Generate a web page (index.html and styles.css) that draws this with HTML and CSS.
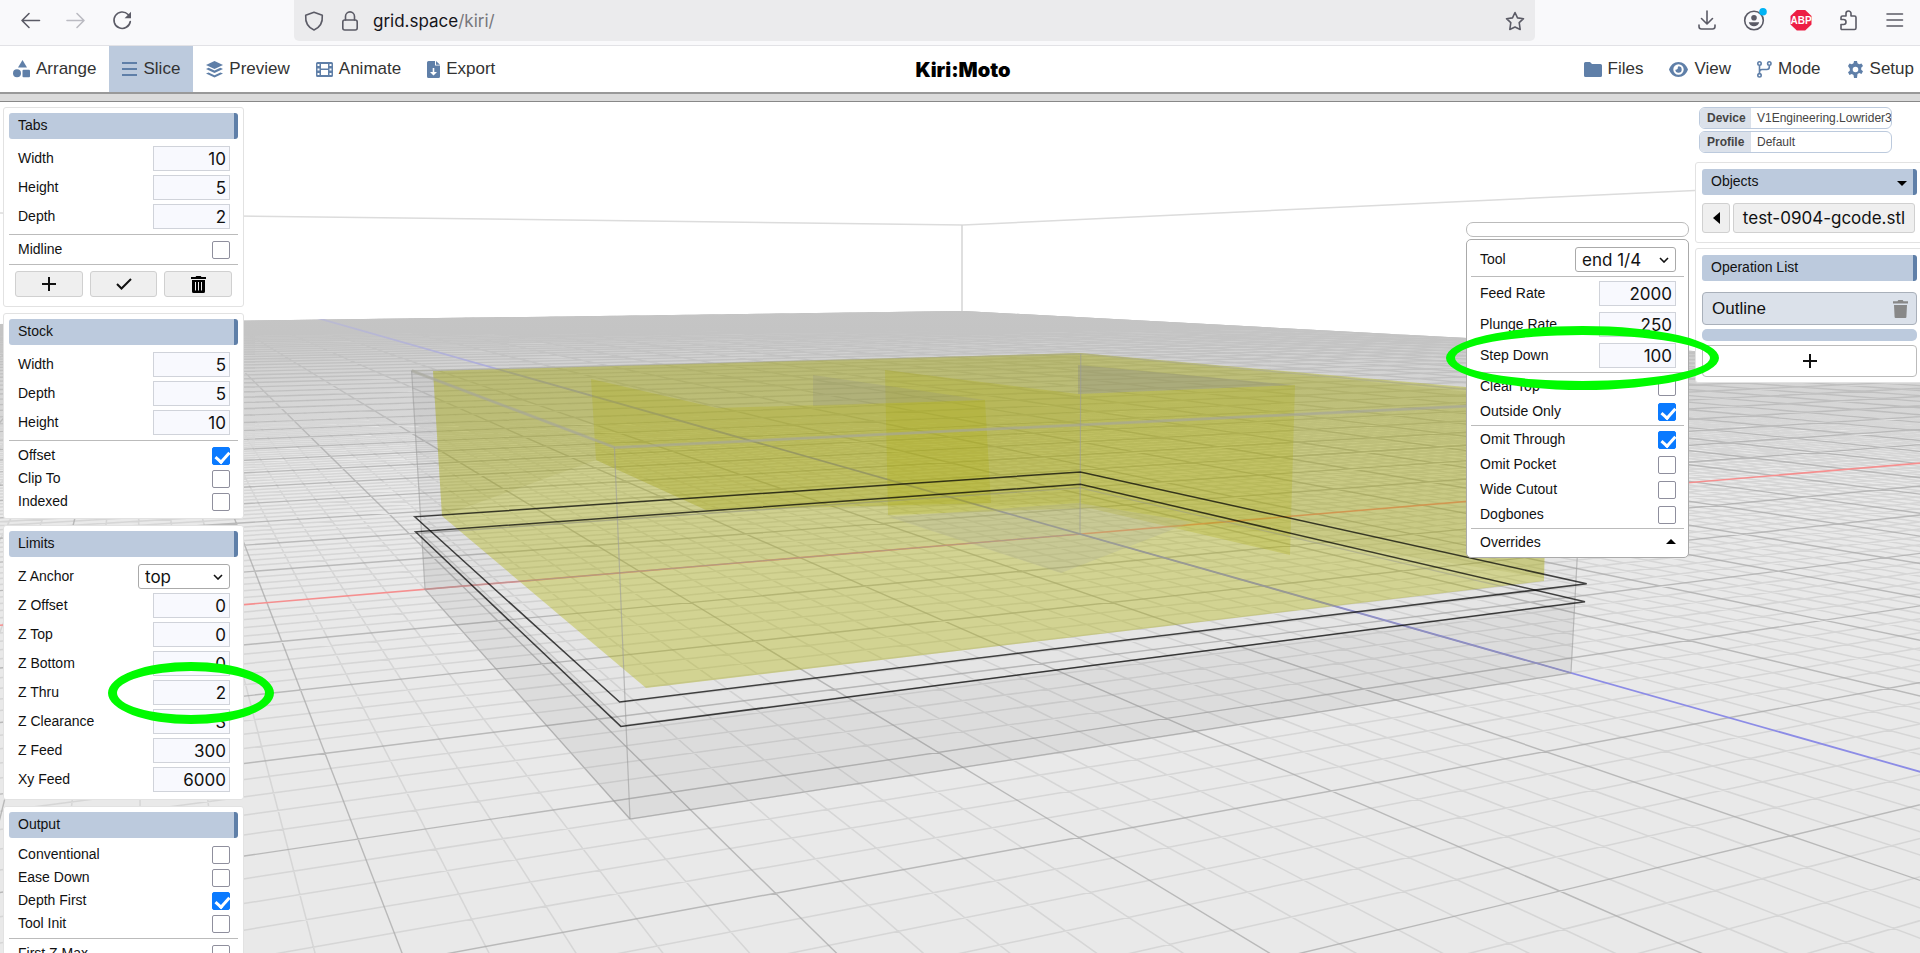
FILE: index.html
```html
<!DOCTYPE html>
<html lang="en">
<head>
<meta charset="utf-8">
<title>Kiri:Moto</title>
<link rel="stylesheet" href="styles.css">
</head>
<body>
<header class="browser">
  <div class="tools">
    <button class="tool" aria-label="Back"><svg viewBox="0 0 20 20"><path d="M19.500 10.500H2M9 3.500 2 10.500l7 7"/></svg></button>
    <button class="tool dim" aria-label="Forward"><svg viewBox="0 0 20 20"><path d="M1 10.500h17M11 3.500l7 7-7 7"/></svg></button>
    <button class="tool" aria-label="Reload"><svg viewBox="0 0 20 20"><path d="M18.300 11.500a8.200 8.200 0 1 1-2.200-7L18 6.400"/><path class="solid" d="M19 1.800v6.400h-6.400z"/></svg></button>
  </div>
  <div class="urlbar">
    <svg class="bicon" viewBox="0 0 20 20"><path d="M10 1.200 18.300 4.300C18.800 11 16 16.500 10 19 4 16.500 1.200 11 1.700 4.300z"/></svg>
    <svg class="bicon" viewBox="0 0 20 20"><rect x="2.800" y="9" width="14.400" height="10" rx="2"/><path d="M5.500 9V5.400a4.500 4.500 0 0 1 9 0V9"/></svg>
    <span class="url">grid.space<span class="path">/kiri/</span></span>
    <button class="tool star" aria-label="Bookmark"><svg viewBox="0 0 20 20"><path d="M10 1.500l2.500 5.400 6 .8-4.300 4 1 6.800L10 16l-5.200 2.500 1-6.800-4.300-4 6-.8z"/></svg></button>
  </div>
  <div class="tools wide">
    <button class="tool" aria-label="Downloads"><svg viewBox="0 0 20 20"><path d="M10 1v12.500M4.500 8.500l5.500 5.500 5.500-5.500M2 15v1.500a2.500 2.500 0 0 0 2.500 2.500h11a2.500 2.500 0 0 0 2.500-2.500V15"/></svg></button>
    <button class="tool" aria-label="Account"><svg viewBox="0 0 20 20"><circle cx="10" cy="10.500" r="9.300"/><circle class="solid" cx="10" cy="7.800" r="2.800"/><path class="solid" d="M4.800 12.300h10.400c-.6 2.600-2.800 4-5.200 4s-4.600-1.400-5.200-4z"/><circle class="dot" cx="19" cy="1.800" r="3.800"/></svg></button>
    <button class="tool" aria-label="Adblock Plus"><svg viewBox="0 0 20 20"><path class="red" d="M5.800 0h8.400L20.500 6v8.500l-6.300 6H5.800l-6.300-6V6z"/><text class="abp" x="10" y="13.500">ABP</text></svg></button>
    <button class="tool" aria-label="Extensions"><svg viewBox="0 0 20 20"><path d="M3 19V14.500h2.500a2.500 2.500 0 0 0 0-5H3V7.500q0-1.500 1.500-1.500H8V3.500a2.500 2.500 0 0 1 5 0V6h3.500Q18 6 18 7.500V18q0 1.500-1.500 1.500H3.500z"/></svg></button>
    <button class="tool" aria-label="Menu"><svg viewBox="0 0 20 20"><path d="M2 4h15.500M2 10h15.500M2 16h15.500"/></svg></button>
  </div>
</header>

<nav class="nav">
  <div class="group">
    <button class="item"><svg width="17" height="18" viewBox="0 0 17 18"><path d="M9.500 0l4.500 7.500H5z"/><circle cx="4" cy="13.300" r="4"/><rect x="9.500" y="9.800" width="7.500" height="7.500" rx="1"/></svg>Arrange</button>
    <button class="item active"><svg width="15" height="14" viewBox="0 0 15 14"><path d="M0 0h15v2H0zM0 6h15v2H0zM0 12h15v2H0z"/></svg>Slice</button>
    <button class="item"><svg width="17" height="17" viewBox="0 0 17 17"><path d="M8.500 0 17 4 8.500 8 0 4zM0 8l2.600-1.200L8.500 9.600l5.900-2.800L17 8l-8.500 4zM0 12.600l2.600-1.200 5.900 2.800 5.900-2.800 2.600 1.200-8.500 4z"/></svg>Preview</button>
    <button class="item"><svg width="17" height="15" viewBox="0 0 17 15"><path fill-rule="evenodd" d="M1.500 0h14Q17 0 17 1.500v12q0 1.500-1.500 1.500h-14Q0 15 0 13.500v-12Q0 0 1.500 0zM1.500 2v2h2V2zm0 4.500v2h2v-2zm0 4.500v2h2v-2zM5 2v4.500h7V2zm0 6v5h7V8zm8.500-6v2h2V2zm0 4.500v2h2v-2zm0 4.500v2h2v-2z"/></svg>Animate</button>
    <button class="item"><svg width="13" height="17" viewBox="0 0 13 17"><path fill-rule="evenodd" d="M1.500 0H8v4.500h5v11q0 1.500-1.500 1.500h-10Q0 17 0 15.500v-14Q0 0 1.500 0zM9 0l4 3.700H9zM5.700 7v4H3l3.500 3.500L10 11H7.300V7z"/></svg>Export</button>
  </div>
  <h1 class="brand">Kiri:Moto</h1>
  <div class="group right">
    <button class="item"><svg width="18" height="15" viewBox="0 0 18 15"><path d="M1.500 0H6l2 2h8.500Q18 2 18 3.500v10q0 1.500-1.500 1.500h-15Q0 15 0 13.500v-12Q0 0 1.500 0z"/></svg>Files</button>
    <button class="item"><svg width="19" height="15" viewBox="0 0 19 15"><path fill-rule="evenodd" d="M9.500 0C14 0 17.500 3 19 7.500 17.500 12 14 15 9.500 15S1.500 12 0 7.500C1.500 3 5 0 9.500 0zm0 2.300a5.200 5.200 0 1 0 0 10.400 5.200 5.200 0 0 0 0-10.400zm0 2a3.200 3.200 0 1 1-3.200 3.400c1.600.3 2.800-.9 2.500-2.500z"/></svg>View</button>
    <button class="item"><svg class="branch" width="15" height="17" viewBox="0 0 15 17"><circle cx="2.500" cy="2.500" r="1.700"/><circle cx="2.500" cy="14.300" r="1.700"/><circle cx="12.300" cy="2.500" r="1.700"/><path d="M2.500 4.500v8M12.300 4.500v1.500q0 2.500-2.500 2.500H5Q2.500 8.500 2.500 11"/></svg>Mode</button>
    <button class="item"><svg width="17" height="17" viewBox="0 0 17 17"><path fill-rule="evenodd" d="M7 0h3l.5 2.300 1.700 1 2.300-.8 1.500 2.600-1.800 1.600v2l1.800 1.600-1.500 2.600-2.300-.8-1.700 1L10 17H7l-.5-2.900-1.700-1-2.300.8L1 11.300l1.800-1.600v-2L1 5.100l1.500-2.600 2.300.8 1.700-1zM8.500 5.700a2.800 2.800 0 1 0 0 5.600 2.800 2.800 0 0 0 0-5.600z"/></svg>Setup</button>
  </div>
</nav>
<div class="strip"></div>

<main class="stage">
  <svg class="scene" id="scene" viewBox="0 102 1920 851" preserveAspectRatio="xMidYMid slice" aria-label="Workspace"></svg>

  <aside class="side left">
    <section class="panel">
      <h2 class="head">Tabs</h2>
      <div class="row"><label for="tw">Width</label><input class="num" id="tw" value="10"></div>
      <div class="row"><label for="th">Height</label><input class="num" id="th" value="5"></div>
      <div class="row"><label for="td">Depth</label><input class="num" id="td" value="2"></div>
      <hr class="rule">
      <div class="row tick"><label for="mid">Midline</label><input type="checkbox" id="mid"></div>
      <hr class="rule">
      <div class="actions">
        <button class="btn" aria-label="Add"><svg width="14" height="14" viewBox="0 0 14 14"><path class="line" d="M7 0v14M0 7h14"/></svg></button>
        <button class="btn" aria-label="Accept"><svg width="16" height="12" viewBox="0 0 16 12"><path class="line" d="M1 6l4.500 4.500L15 1"/></svg></button>
        <button class="btn" aria-label="Delete"><svg width="15" height="17" viewBox="0 0 15 17"><path fill-rule="evenodd" d="M0 1h4.500l.8-1h4.400l.8 1H15v2H0zM1 4h13v11.500q0 1.500-1.500 1.500h-10Q1 17 1 15.500zM4 6v8.500h1V6zm3 0v8.500h1V6zm3 0v8.500h1V6z"/></svg></button>
      </div>
    </section>
    <section class="panel">
      <h2 class="head">Stock</h2>
      <div class="row"><label for="sw">Width</label><input class="num" id="sw" value="5"></div>
      <div class="row"><label for="sd">Depth</label><input class="num" id="sd" value="5"></div>
      <div class="row"><label for="sh">Height</label><input class="num" id="sh" value="10"></div>
      <hr class="rule">
      <div class="row tick"><label for="so">Offset</label><input type="checkbox" id="so" checked></div>
      <div class="row tick"><label for="sc">Clip To</label><input type="checkbox" id="sc"></div>
      <div class="row tick"><label for="si">Indexed</label><input type="checkbox" id="si"></div>
    </section>
    <section class="panel">
      <h2 class="head">Limits</h2>
      <div class="row"><label for="za">Z Anchor</label><span class="pick"><select id="za"><option>top</option></select><svg width="10" height="6" viewBox="0 0 10 6"><path class="line" d="M1 1l4 4 4-4"/></svg></span></div>
      <div class="row"><label for="zo">Z Offset</label><input class="num" id="zo" value="0"></div>
      <div class="row"><label for="zt">Z Top</label><input class="num" id="zt" value="0"></div>
      <div class="row"><label for="zb">Z Bottom</label><input class="num" id="zb" value="0"></div>
      <div class="row"><label for="zh">Z Thru</label><input class="num" id="zh" value="2"><span class="ring thru"></span></div>
      <div class="row"><label for="zc">Z Clearance</label><input class="num" id="zc" value="3"></div>
      <div class="row"><label for="zf">Z Feed</label><input class="num" id="zf" value="300"></div>
      <div class="row"><label for="xf">Xy Feed</label><input class="num" id="xf" value="6000"></div>
    </section>
    <section class="panel">
      <h2 class="head">Output</h2>
      <div class="row tick"><label for="oc">Conventional</label><input type="checkbox" id="oc"></div>
      <div class="row tick"><label for="oe">Ease Down</label><input type="checkbox" id="oe"></div>
      <div class="row tick"><label for="od">Depth First</label><input type="checkbox" id="od" checked></div>
      <div class="row tick"><label for="ot">Tool Init</label><input type="checkbox" id="ot"></div>
      <hr class="rule">
      <div class="row tick"><label for="oz">First Z Max</label><input type="checkbox" id="oz"></div>
    </section>
  </aside>

  <div class="popup">
    <div class="grip"></div>
    <section class="sheet">
      <div class="row"><label for="pt">Tool</label><span class="pick wider"><select id="pt"><option>end 1/4</option></select><svg width="10" height="6" viewBox="0 0 10 6"><path class="line" d="M1 1l4 4 4-4"/></svg></span></div>
      <hr class="rule">
      <div class="row"><label for="pf">Feed Rate</label><input class="num" id="pf" value="2000"></div>
      <div class="row"><label for="pp">Plunge Rate</label><input class="num" id="pp" value="250"></div>
      <div class="row"><label for="ps">Step Down</label><input class="num" id="ps" value="100"><span class="ring step"></span></div>
      <hr class="rule">
      <div class="row tick"><label for="pc">Clear Top</label><input type="checkbox" id="pc"></div>
      <div class="row tick"><label for="po">Outside Only</label><input type="checkbox" id="po" checked></div>
      <hr class="rule">
      <div class="row tick"><label for="pu">Omit Through</label><input type="checkbox" id="pu" checked></div>
      <div class="row tick"><label for="pk">Omit Pocket</label><input type="checkbox" id="pk"></div>
      <div class="row tick"><label for="pw">Wide Cutout</label><input type="checkbox" id="pw"></div>
      <div class="row tick"><label for="pd">Dogbones</label><input type="checkbox" id="pd"></div>
      <hr class="rule">
      <button class="row more">Overrides<svg width="10" height="5" viewBox="0 0 10 5"><path d="M5 0l5 5H0z"/></svg></button>
    </section>
  </div>

  <aside class="side rightside">
    <dl class="tags">
      <div class="tag"><dt>Device</dt><dd>V1Engineering.Lowrider3</dd></div>
      <div class="tag"><dt>Profile</dt><dd>Default</dd></div>
    </dl>
    <section class="panel">
      <h2 class="head">Objects<svg width="10" height="5" viewBox="0 0 10 5"><path d="M0 0h10L5 5z"/></svg></h2>
      <div class="object">
        <button class="btn arrow" aria-label="Collapse"><svg width="7" height="12" viewBox="0 0 7 12"><path d="M7 0v12L0 6z"/></svg></button>
        <button class="btn name">test-0904-gcode.stl</button>
      </div>
    </section>
    <section class="panel">
      <h2 class="head">Operation List</h2>
      <div class="op">Outline<button class="bin" aria-label="Delete Outline"><svg width="15" height="18" viewBox="0 0 15 18"><path d="M0 1.200h4.500L5.300 0h4.400l.8 1.200H15v2.300H0zM1 5h13l-.6 12q0 1-1 1H2.600q-1 0-1-1z"/></svg></button></div>
      <div class="bar"></div>
      <button class="add" aria-label="Add operation"><svg width="14" height="14" viewBox="0 0 14 14"><path class="line" d="M7 0v14M0 7h14"/></svg></button>
    </section>
  </aside>
</main>
<script src="scene.js"></script>
</body>
</html>
```
FILE: styles.css
```css
* { box-sizing: border-box; }
html, body { height: 100%; }
body {
  margin: 0;
  display: flex;
  flex-direction: column;
  overflow: hidden;
  background: #fff;
  color: #111;
  font-family: "Liberation Sans", Arial, sans-serif;
  font-size: 14px;
}
button { font: inherit; color: inherit; margin: 0; padding: 0; border: 0; background: none; }
h1, h2, dl, dd { margin: 0; }

.browser {
  flex: none;
  display: flex;
  align-items: flex-start;
  height: 46px;
  padding: 0 15px 0 20px;
  background: #f9f9fb;
  border-bottom: 1px solid #e2e2e6;
}
.tools { display: flex; gap: 26px; padding-top: 10px; }
.tools.wide { gap: 27px; }
.tool { width: 20px; height: 20px; }
.tool svg, .bicon {
  display: block;
  width: 20px;
  height: 20px;
  overflow: visible;
  fill: none;
  stroke: #5b5b66;
  stroke-width: 1.6;
  stroke-linecap: round;
  stroke-linejoin: round;
}
.dim svg { stroke: #bbbbc2; }
.tool .solid { fill: #5b5b66; stroke: none; }
.tool .dot { fill: #00b3f4; stroke: none; }
.tool .red { fill: #ed1e45; stroke: none; }
.tool .abp { fill: #fff; stroke: none; font: 700 10px "Liberation Sans", Arial, sans-serif; text-anchor: middle; }
.urlbar {
  flex: 1;
  display: flex;
  align-items: center;
  height: 41px;
  margin: 0 162px;
  padding: 0 10px;
  background: #ebebed;
  border-radius: 0 0 5px 5px;
}
.bicon + .bicon { margin-left: 16px; }
.url { flex: 1; margin-left: 13px; font: 17px Inter, sans-serif; color: #15141a; }
.path { color: #77777c; }

.nav {
  flex: none;
  display: grid;
  grid-template-columns: 1fr auto 1fr;
  height: 46px;
}
.group { display: flex; }
.right { justify-content: flex-end; }
.item {
  display: flex;
  align-items: center;
  gap: 6px;
  padding: 0 13px;
  font-size: 17px;
  color: #333;
}
.item svg { fill: #5f7fa8; }
.item .branch { fill: none; stroke: #5f7fa8; stroke-width: 1.6; }
.item.active { background: #bccadd; }
.right .item:last-child { padding-right: 6px; }
.brand { align-self: center; padding: 2px 0 0 6px; font: 900 20px Inter, sans-serif; color: #000; }
.strip { flex: none; height: 10px; background: #dbdbdb; border-top: 2px solid #999; border-bottom: 1px solid #888; }

.stage { position: relative; flex: 1; min-height: 0; overflow: hidden; }
.scene { position: absolute; inset: 0; width: 100%; height: 100%; }
.side { position: absolute; display: flex; flex-direction: column; gap: 6px; }
.left { left: 3px; top: 5px; width: 241px; }
.rightside { right: -5px; top: 5px; width: 230px; }
.panel { padding: 5px; background: #fff; border: 1px solid #e2e2e2; border-radius: 3px; }
.head {
  display: flex;
  align-items: center;
  justify-content: space-between;
  height: 26px;
  margin-bottom: 5px;
  padding: 0 6px 2px 9px;
  font-size: 14px;
  font-weight: 400;
  background: #bccadd;
  border-right: 4px solid #5f7fa8;
  border-radius: 3px;
}
.head svg { margin-top: 4px; }
.row {
  position: relative;
  display: flex;
  align-items: center;
  justify-content: space-between;
  height: 29px;
  padding: 0 8px 0 9px;
}
.row label { padding-bottom: 2px; }
.tick { height: 23px; }
.rule { height: 1px; margin: 3px 0; border: 0; background: #bbb; }
.num {
  width: 77px;
  height: 25px;
  padding: 0 3px;
  border: 1px solid #d0d3da;
  background: #f8f9fe;
  color: #111;
  font: 17px Inter, sans-serif;
  text-align: right;
}
input[type="checkbox"] {
  appearance: none;
  position: relative;
  width: 18px;
  height: 18px;
  margin: 0;
  border: 1px solid #8f8f9d;
  border-radius: 2px;
  background: #fff;
}
input[type="checkbox"]:checked { background: #0a7aff; border-color: #0a7aff; }
input[type="checkbox"]:checked::after {
  content: "";
  position: absolute;
  left: 5px;
  top: 1px;
  width: 6px;
  height: 11px;
  border: solid #fff;
  border-width: 0 3px 3px 0;
  transform: rotate(42deg);
}
.line { fill: none; stroke: #111; stroke-width: 2; }
.pick { position: relative; width: 92px; height: 25px; }
.pick select {
  appearance: none;
  width: 100%;
  height: 100%;
  padding: 0 6px;
  border: 1px solid #aaa;
  border-radius: 3px;
  background: #fff;
  color: #111;
  font: 17px Inter, sans-serif;
}
.pick svg { position: absolute; right: 7px; top: 10px; pointer-events: none; }
.pick .line { stroke-width: 1.6; }
.actions { display: flex; gap: 7px; padding: 3px 6px 4px; }
.btn {
  display: flex;
  align-items: center;
  justify-content: center;
  flex: 1;
  height: 26px;
  border: 1px solid #d0d0d0;
  border-radius: 3px;
  background: #efefef;
}
.ring { position: absolute; top: 50%; z-index: 2; border: 9px solid #00fb00; border-radius: 50%; pointer-events: none; }
.thru { right: -36px; width: 166px; height: 62px; margin-top: -31px; }
.step { right: -35px; width: 273px; height: 64px; margin-top: -30px; }

.popup { position: absolute; z-index: 3; right: 231px; top: 120px; width: 223px; }
.grip { height: 15px; margin-bottom: 2px; border: 1px solid #bbb; border-radius: 7px; background: #fff; }
.sheet { padding: 4px; border: 1px solid #aaa; border-radius: 5px; background: #fff; }
.sheet .row { height: 31px; }
.sheet .tick { height: 25px; }
.sheet .more { width: 100%; height: 23px; }
.sheet .rule { margin: 1px 0; }
.wider { width: 101px; }

.tags { display: grid; gap: 2px; margin: 0 33px 3px 4px; }
.tag { display: flex; align-items: center; height: 22px; overflow: hidden; border: 1px solid #bccadd; border-radius: 6px; background: #fff; font-size: 12px; color: #444; }
.tag dt { flex: none; width: 51px; padding-left: 7px; line-height: 22px; font-weight: 700; background: #dbe1ea; }
.tag dd { padding-left: 6px; }
.rightside .panel { padding: 6px 7px 5px 6px; }
.object { display: flex; gap: 3px; padding: 3px 2px 4px 0; }
.object .btn { height: 30px; }
.object .arrow { flex: none; width: 28px; }
.name { font: 17px Inter, sans-serif; }
.rightside .panel + .panel { margin-top: -1px; }
.op {
  display: flex;
  align-items: center;
  justify-content: space-between;
  height: 33px;
  margin-top: 11px;
  padding: 0 8px 0 9px;
  border: 1px solid #a9b0ba;
  border-radius: 4px;
  background: #dbe1ea;
  font-size: 17px;
}
.bin svg { display: block; fill: #888; }
.bar { height: 12px; margin: 4px 0; border-radius: 5px; background: #bccadd; }
.add { display: flex; align-items: center; justify-content: center; width: 100%; height: 32px; border: 1px solid #bbb; border-radius: 4px; background: #fff; }
```
FILE: scene.js
```js
const NS = 'http://www.w3.org/2000/svg';
const scene = document.getElementById('scene');

// Gaussian elimination, used to find the camera from the stock corners.
function solve(m) {
  const n = m.length;
  for (let i = 0; i < n; i++) {
    let p = i;
    for (let r = i + 1; r < n; r++) if (Math.abs(m[r][i]) > Math.abs(m[p][i])) p = r;
    [m[i], m[p]] = [m[p], m[i]];
    for (let r = 0; r < n; r++) {
      if (r === i) continue;
      const f = m[r][i] / m[i][i];
      for (let c = i; c <= n; c++) m[r][c] -= f * m[i][c];
    }
  }
  return m.map((row, i) => row[n] / row[i]);
}

const S = 21;
const corners = [[0, 0, 1080, 534], [S, 0, 425, 589.3], [S, S, 630, 819], [0, S, 1571, 673]];
const eq = [];
for (const [a, b, x, y] of corners) {
  eq.push([a, b, 1, 0, 0, 0, -a * x, -b * x, x]);
  eq.push([0, 0, 0, a, b, 1, -a * y, -b * y, y]);
}
const h = solve(eq);
const ground = (a, b) => [h[0] * a + h[1] * b + h[2], h[3] * a + h[4] * b + h[5], h[6] * a + h[7] * b + 1];

// Vertical direction by least squares over the known top corners.
const tops = [[0, 0, 1080.4, 353], [S, 0, 411.4, 370], [S, S, 615.5, 450.7]];
const A = [[0, 0, 0, 0], [0, 0, 0, 0], [0, 0, 0, 0]];
for (const [a, b, x, y] of tops) {
  const g = ground(a, b);
  for (const row of [[1, 0, -x, x * g[2] - g[0]], [0, 1, -y, y * g[2] - g[1]]])
    for (let i = 0; i < 3; i++) for (let j = 0; j < 4; j++) A[i][j] += row[i] * row[j];
}
const v = solve(A);
const project = (a, b, z = 0) => {
  const g = ground(a, b).map((k, i) => k + z * v[i]);
  return [g[0] / g[2], g[1] / g[2]];
};

function add(tag, attrs, parent = scene) {
  const el = document.createElementNS(NS, tag);
  for (const k in attrs) el.setAttribute(k, attrs[k]);
  parent.appendChild(el);
  return el;
}
const pts = list => list.map(p => p[0].toFixed(1) + ',' + p[1].toFixed(1)).join(' ');
const poly = (list, fill, stroke = 'none', w = 1) => add('polygon', { points: pts(list), fill, stroke, 'stroke-width': w });
const line = (p, q, stroke, w = 1) => add('line', { x1: p[0], y1: p[1], x2: q[0], y2: q[1], stroke, 'stroke-width': w });

// Floor
const floor = [[0, 324], [963, 311], [1467, 338], [1920, 364], [1920, 953], [0, 953]];
const clip = add('clipPath', { id: 'floor' });
add('polygon', { points: pts(floor) }, clip);
poly(floor, '#e9e9e9');
const grid = add('g', { 'clip-path': 'url(#floor)', fill: 'none' });

function segment(fixed, isA) {
  const at = t => (isA ? ground(fixed, t) : ground(t, fixed));
  let lo = -400, hi = 400;
  const w0 = at(0)[2], dw = at(1)[2] - w0;
  const lim = (0.04 - w0) / dw;
  if (dw > 0) lo = Math.max(lo, lim); else hi = Math.min(hi, lim);
  if (lo >= hi) return '';
  const p = at(lo), q = at(hi);
  return `M${(p[0] / p[2]).toFixed(1)} ${(p[1] / p[2]).toFixed(1)}L${(q[0] / q[2]).toFixed(1)} ${(q[1] / q[2]).toFixed(1)}`;
}
let minor = '', major = '';
for (let i = -250; i <= 60; i++) {
  if (i === 0) continue;
  const d = segment(i, true) + segment(i, false);
  if (i % 5 === 0) major += d; else minor += d;
}
add('path', { d: minor, stroke: '#cfcfcf', 'stroke-opacity': 0.75, 'stroke-width': 1.5 }, grid);
add('path', { d: major, stroke: '#a8a8a8', 'stroke-opacity': 0.75, 'stroke-width': 1.4 }, grid);
add('path', { d: segment(0, false), stroke: '#f58f8f', 'stroke-width': 1.6 }, grid);
add('path', { d: segment(0, true), stroke: '#8c8ce6', 'stroke-width': 1.8 }, grid);

// Distance haze
const haze = add('linearGradient', { id: 'haze', gradientUnits: 'userSpaceOnUse', x1: 0, y1: 311, x2: 0, y2: 450 });
add('stop', { offset: 0, 'stop-color': '#c9c9c9', 'stop-opacity': 0.8 }, haze);
add('stop', { offset: 0.4, 'stop-color': '#cfcfcf', 'stop-opacity': 0.5 }, haze);
add('stop', { offset: 1, 'stop-color': '#e0e0e0', 'stop-opacity': 0 }, haze);
poly(floor, 'url(#haze)');

// Build volume outline
line([0, 213], [963, 225], '#dcdcdc', 1.5);
line([963, 225], [1920, 180], '#dcdcdc', 1.5);
line([962, 225], [962, 311], '#d4d4d4', 1.5);

// Stock
const box = z => [[0, 0], [S, 0], [S, S], [0, S]].map(([a, b]) => project(a, b, z));
const low = box(0), mid = box(0.26), high = box(1);
poly([high[0], high[1], low[1], low[2], low[3], high[3]], 'rgba(0,0,0,.015)');
poly([mid[1], low[1], low[2], low[3], mid[3], mid[2]], 'rgba(0,0,0,.035)');
poly([high[1], low[1], low[0], high[0]], 'rgba(0,0,0,.02)');

// Part
poly([[433, 371], [1080, 353], [1466, 387], [1548, 400], [1544, 581], [646, 688], [442, 516]], 'rgba(178,180,0,.36)');
poly([[433, 371], [1080, 353], [1548, 400], [1544, 578], [1080, 503], [706, 510], [596, 460], [442, 516]], 'rgba(130,130,20,.1)');
poly([[591, 379], [717, 408], [985, 400], [991, 503], [706, 510], [596, 460]], 'rgba(170,172,0,.24)');
poly([[885, 370], [1078, 394], [1295, 385], [1290, 555], [1089, 508], [888, 515]], 'rgba(170,172,0,.24)');
poly([[1078, 365], [1295, 385], [1078, 394]], 'rgba(135,135,130,.34)');
poly([[813, 375], [985, 400], [813, 406]], 'rgba(135,135,130,.22)');
poly([[889, 517], [1078, 503], [1192, 522], [1061, 573]], 'rgba(170,170,160,.25)');

const edge = 'rgba(155,155,155,.6)';
poly(low, 'none', edge, 1.2);
poly(mid, 'none', 'rgba(150,150,150,.4)', 1.2);
poly([high[0], high[1], high[2], high[3]], 'none', 'rgba(165,165,150,.4)', 1.2);
line(high[1], high[2], 'rgba(165,165,155,.55)', 3);
line(high[2], high[3], 'rgba(165,165,155,.55)', 3);
low.forEach((p, i) => line(p, high[i], edge, 1.2));

// Slice outlines
poly([[414.7, 516.8], [619.6, 702], [1586.7, 583.7], [1080.4, 472]], 'none', 'rgba(0,0,0,.72)', 1.5);
poly([[415.5, 531.8], [620.8, 726.4], [1585, 601.7], [1080.4, 484.3]], 'none', 'rgba(0,0,0,.72)', 1.5);
```
